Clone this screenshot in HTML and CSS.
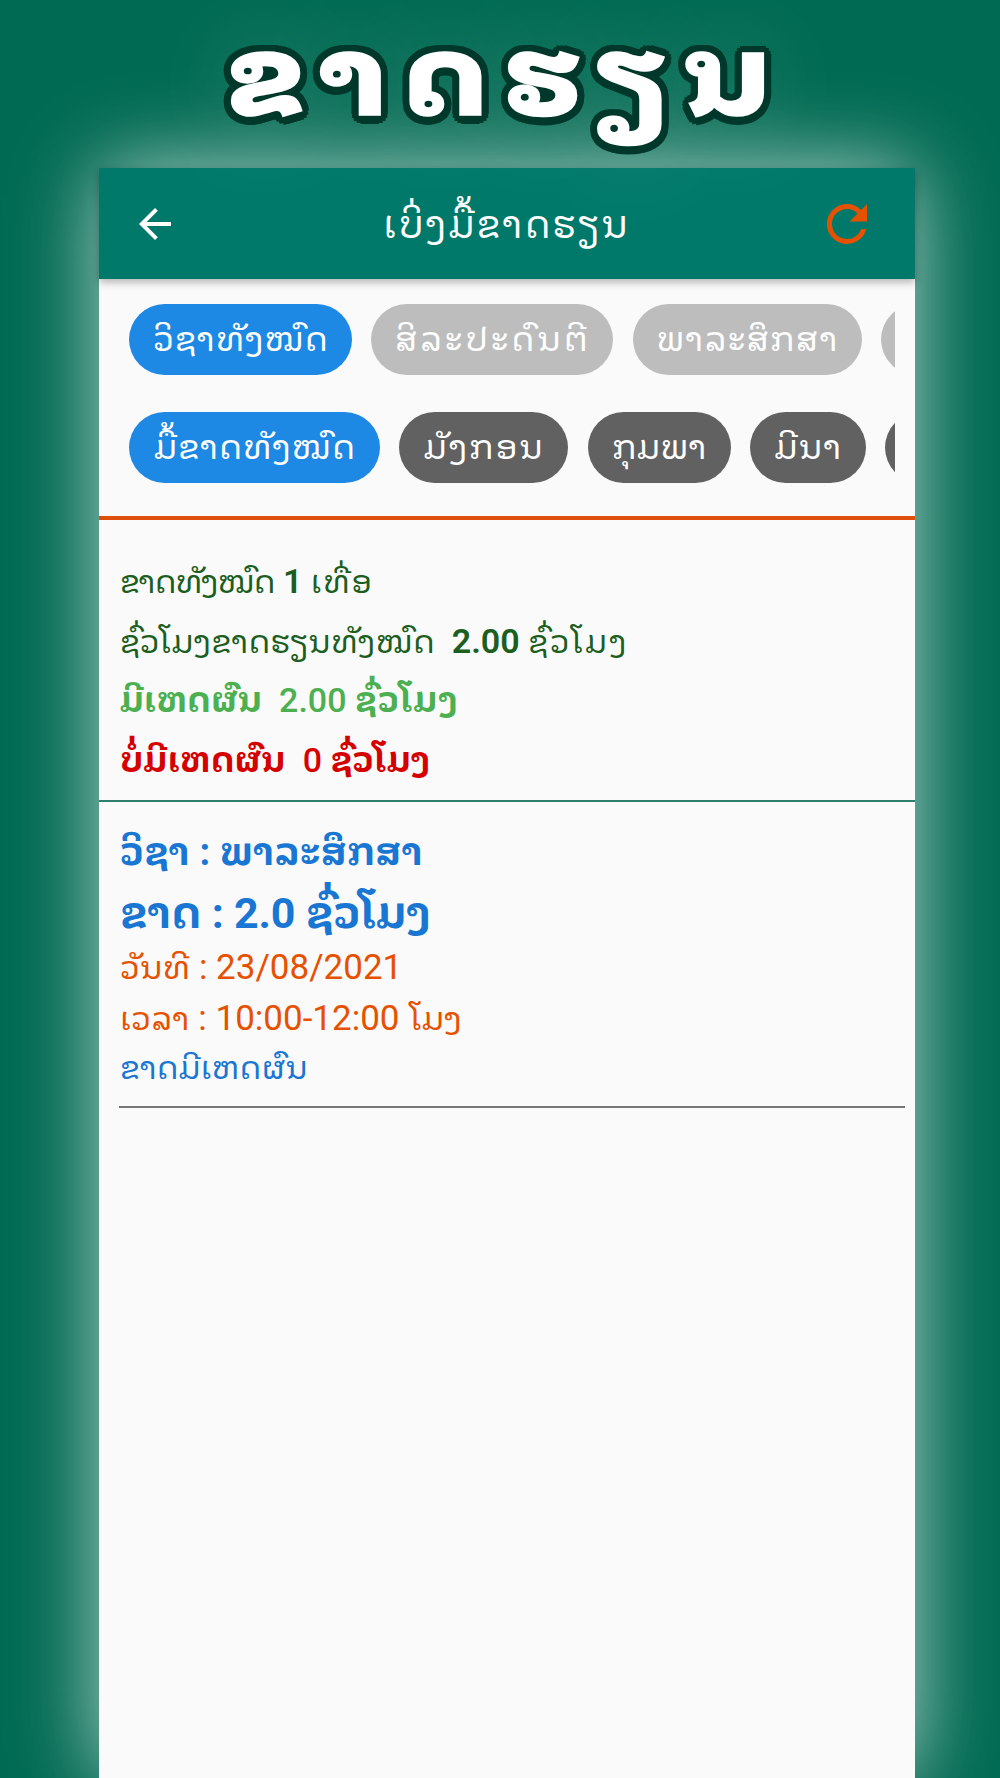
FILE: index.html
```html
<!DOCTYPE html>
<html lang="lo">
<head>
    <meta charset="UTF-8">
    <meta name="viewport" content="width=device-width, initial-scale=1.0">
    <title>ຂາດຮຽນ</title>
    <link rel="stylesheet" href="styles.css">
</head>
<body>
    <h1>ຂາດຮຽນ</h1>
    <main class="phone">
        <header class="app-bar">
            <svg class="icon back" viewBox="0 0 24 24"><path d="M20 11H7.83l5.59-5.59L12 4l-8 8 8 8 1.41-1.41L7.83 13H20v-2z"/></svg>
            <span class="title">ເບິ່ງມື້ຂາດຮຽນ</span>
            <svg class="icon refresh" viewBox="0 0 24 24"><path d="M17.65 6.35A7.96 7.96 0 0 0 12 4a8 8 0 1 0 7.73 10h-2.08A6 6 0 1 1 12 6c1.66 0 3.14.69 4.22 1.78L13 11h7V4l-2.35 2.35z"/></svg>
        </header>

        <nav class="filters">
            <div class="chips">
                <span class="chip active s1">ວິຊາທັງໝົດ</span>
                <span class="chip light s2">ສິລະປະດົນຕີ</span>
                <span class="chip light s3">ພາລະສຶກສາ</span>
                <span class="chip light s4"></span>
            </div>
            <div class="chips">
                <span class="chip active m1">ມື້ຂາດທັງໝົດ</span>
                <span class="chip dark m2">ມັງກອນ</span>
                <span class="chip dark m3">ກຸມພາ</span>
                <span class="chip dark m4">ມີນາ</span>
                <span class="chip dark m5"></span>
            </div>
        </nav>

        <section class="summary">
            <p class="total count"><span>ຂາດທັງໝົດ</span> <b>1</b> <span class="unit">ເທື່ອ</span></p>
            <p class="total"><span>ຊົ່ວໂມງຂາດຮຽນທັງໝົດ</span>&nbsp; <b>2.00</b> <span class="unit">ຊົ່ວໂມງ</span></p>
            <p class="excused"><span>ມີເຫດຜົນ</span>&nbsp; <b>2.00</b> <span class="unit">ຊົ່ວໂມງ</span></p>
            <p class="unexcused"><span>ບໍ່ມີເຫດຜົນ</span>&nbsp; <b>0</b> <span>ຊົ່ວໂມງ</span></p>
        </section>

        <section class="record">
            <p class="subject">ວິຊາ : ພາລະສຶກສາ</p>
            <p class="hours">ຂາດ : 2.0 ຊົ່ວໂມງ</p>
            <p class="date"><span>ວັນທີ</span> : 23/08/2021</p>
            <p class="time"><span>ເວລາ</span> : 10:00-12:00 <span>ໂມງ</span></p>
            <p class="reason">ຂາດມີເຫດຜົນ</p>
        </section>
    </main>
</body>
</html>
```
FILE: styles.css
```css
* {
    box-sizing: border-box;
}

body {
    margin: 0;
    height: 1778px;
    overflow: hidden;
    font-family: Roboto, "Noto Sans Lao Looped", "DejaVu Sans", sans-serif;
    background: #006a52;
}

h1 {
    width: 800px;
    height: 168px;
    margin: 0 auto;
    padding-left: 10px;
    font-size: 107px;
    line-height: 156px;
    letter-spacing: 12.5px;
    text-align: center;
    color: #fff;
    transform: scaleX(1.15);
    -webkit-text-stroke: 3.5px #fff;
    /* dark outline, then a soft glow behind it */
    text-shadow:
        8px 0 #00382c, 7.5px 4px #00382c, 6px 7px #00382c, 3.5px 9px #00382c,
        0 10px #00382c, -3.5px 9px #00382c, -6px 7px #00382c, -7.5px 4px #00382c,
        -8px 0 #00382c, -7.5px -3px #00382c, -6px -6px #00382c, -3.5px -8px #00382c,
        0 -8.5px #00382c, 3.5px -8px #00382c, 6px -6px #00382c, 7.5px -3px #00382c,
        0 0 80px rgba(255, 255, 255, 0.3);
}

.phone {
    width: 816px;
    height: 1610px;
    margin-left: 99px;
    background: #fafafa;
    box-shadow: 0 0 80px rgba(255, 255, 255, 0.7);
}

/* App bar */
.app-bar {
    display: flex;
    align-items: center;
    height: 111px;
    padding: 0 38px 0 31.5px;
    background: #00796b;
    color: #fff;
    box-shadow: 0 3px 8px rgba(0, 0, 0, 0.3);
}

.title {
    flex: 1;
    padding: 0 0 7px 18px;
    font-size: 38px;
    letter-spacing: 2px;
    text-align: center;
}

.icon {
    width: 48px;
    height: 48px;
    fill: #fff;
}

.refresh {
    width: 60px;
    height: 60px;
    fill: #e65100;
}

/* Filter chips */
.filters {
    height: 241px;
    padding: 25px 20px 0 30px;
    border-bottom: 4px solid #dd4f0b;
}

.chips {
    display: flex;
    gap: 19.3px;
    margin-bottom: 37px;
    overflow: hidden;
}

.chip {
    display: flex;
    flex: none;
    align-items: center;
    justify-content: center;
    height: 71px;
    padding: 0 0 8px 1px;
    border-radius: 36px;
    font-size: 34px;
    letter-spacing: 0.8px;
    color: #fff;
}

.active { background: #1e88e5; }
.light { background: #bdbdbd; }
.dark { background: #616161; }

.s1 { width: 223px; }
.s2 { width: 242px; letter-spacing: 2.7px; }
.s3 { width: 229px; letter-spacing: 1px; }
.s4 { width: 200px; }
.m1 { width: 251px; }
.m2 { width: 169px; letter-spacing: 1.7px; }
.m3 { width: 143px; letter-spacing: 0.2px; }
.m4 { width: 116px; }
.m5 { width: 200px; }

p {
    margin: 0;
    white-space: nowrap;
}

/* Totals */
.summary {
    height: 282px;
    padding: 31px 21px 0;
    font-size: 34px;
    line-height: 60px;
    border-bottom: 2px solid #2f7f6c;
}

.summary p { height: 59.6px; }
.summary b { font-weight: 600; }

.total { color: #1b5e20; }
.total span { font-size: 32px; letter-spacing: 0.1px; }
.count span { letter-spacing: -1.1px; }
.total .unit { letter-spacing: 1.9px; }
.count .unit { letter-spacing: 1.2px; }

.excused { color: #4caf50; }
.unexcused { color: #d50000; }

.excused span,
.unexcused span {
    font-weight: bold;
    letter-spacing: 0.1px;
}

.excused .unit { letter-spacing: 0.8px; }

.summary .excused b,
.summary .unexcused b { font-weight: 500; }

/* Absence record */
.record {
    height: 306px;
    margin: 0 10px 0 20px;
    padding: 20px 1px 0;
    border-bottom: 2px solid #757575;
    font-size: 35px;
    line-height: 49.5px;
    color: #1976d2;
}

.subject, .hours { font-weight: bold; line-height: 60.5px; }
.subject { font-size: 38px; letter-spacing: 0.1px; }
.hours { font-size: 43px; letter-spacing: -0.2px; }
.date, .time { color: #e65100; }
.date span, .time span { font-size: 32.5px; }
.reason { font-size: 32px; }
```
